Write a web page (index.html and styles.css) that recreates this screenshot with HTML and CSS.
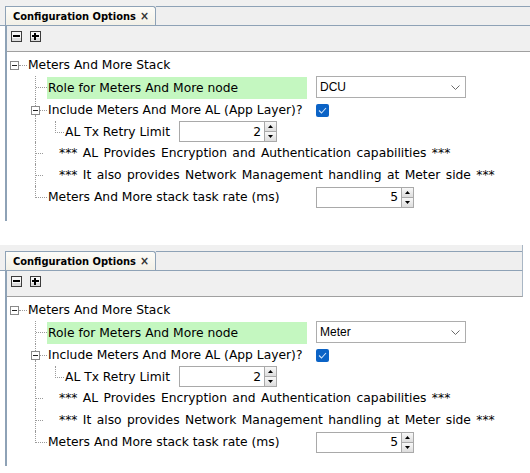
FILE: index.html
```html
<!DOCTYPE html>
<html>
<head>
<meta charset="utf-8">
<link rel="stylesheet" href="styles.css">
</head>
<body>
<div class="page">
  <div class="panel">
    <div class="tabbar">
      <div class="tab"><span class="tab-title">Configuration Options</span><span class="tab-close">×</span></div>
      <div class="tabfill"></div>
    </div>
    <div class="frame">
      <div class="toolbar">
        <svg class="tbtn" width="11" height="11" viewBox="0 0 11 11"><rect x="0.5" y="0.5" width="10" height="10" fill="#f7f7f7" stroke="#3c3c3c"/><rect x="1" y="7" width="9" height="3" fill="#dcdcdc"/><rect x="2" y="4" width="7" height="2" fill="#000"/></svg>
        <svg class="tbtn" width="11" height="11" viewBox="0 0 11 11"><rect x="0.5" y="0.5" width="10" height="10" fill="#f7f7f7" stroke="#3c3c3c"/><rect x="1" y="7" width="9" height="3" fill="#dcdcdc"/><rect x="2" y="4" width="7" height="2" fill="#000"/><rect x="4" y="2" width="2" height="7" fill="#000"/></svg>
      </div>
      <div class="content">
        <div class="row">
          <span class="sp3"></span>
          <span class="exp-root"><svg width="9" height="9" viewBox="0 0 9 9"><rect x="0.5" y="0.5" width="8" height="8" fill="#fff" stroke="#8a8a8a"/><rect x="2" y="4" width="5" height="1" fill="#222"/></svg></span>
          <span class="hcon w8"><span class="half"></span></span>
          <span class="label">Meters And More Stack</span>
        </div>
        <div class="row row-tall">
          <span class="sp28"></span>
          <span class="tee w12"><span class="half"></span></span>
          <span class="label w-role hl">Role for Meters And More node</span>
          <div class="dropdown"><span>DCU</span><svg class="chev" width="9" height="5" viewBox="0 0 9 5"><path d="M0.5 0.5 L4.5 4.5 L8.5 0.5" fill="none" stroke="#6a6a6a"/></svg></div>
        </div>
        <div class="row">
          <span class="sp24"></span>
          <span class="exp"><span class="seg-top"></span><svg width="9" height="9" viewBox="0 0 9 9"><rect x="0.5" y="0.5" width="8" height="8" fill="#fff" stroke="#8a8a8a"/><rect x="2" y="4" width="5" height="1" fill="#222"/></svg><span class="seg-bot"></span></span>
          <span class="hcon w7"><span class="half"></span></span>
          <span class="label w269">Include Meters And More AL (App Layer)?</span>
          <span class="check"><svg width="9" height="7" viewBox="0 0 9 7"><path d="M1 3.5 L3.5 6 L8 1" fill="none" stroke="#cfe3fa" stroke-width="1.1"/></svg></span>
        </div>
        <div class="row row-short">
          <span class="sp28"></span>
          <span class="vline w20"></span>
          <span class="elbow w9"><span class="half"></span></span>
          <span class="label w115">AL Tx Retry Limit</span>
          <div class="spin">
            <span class="spin-val">2</span>
            <span class="spin-btns">
              <span class="spin-btn"><svg width="5" height="3" viewBox="0 0 5 3"><path d="M2.5 0 L5 3 L0 3 Z" fill="#000"/></svg></span>
              <span class="spin-btn"><svg width="5" height="3" viewBox="0 0 5 3"><path d="M0 0 L5 0 L2.5 3 Z" fill="#000"/></svg></span>
            </span>
          </div>
        </div>
        <div class="row">
          <span class="sp28"></span>
          <span class="tee w8"><span class="half"></span></span>
          <span class="label note">*** AL Provides Encryption and Authentication capabilities ***</span>
        </div>
        <div class="row">
          <span class="sp28"></span>
          <span class="tee w8"><span class="half"></span></span>
          <span class="label note">*** It also provides Network Management handling at Meter side ***</span>
        </div>
        <div class="row">
          <span class="sp28"></span>
          <span class="elbow w12"><span class="half"></span></span>
          <span class="label w269">Meters And More stack task rate (ms)</span>
          <div class="spin">
            <span class="spin-val">5</span>
            <span class="spin-btns">
              <span class="spin-btn"><svg width="5" height="3" viewBox="0 0 5 3"><path d="M2.5 0 L5 3 L0 3 Z" fill="#000"/></svg></span>
              <span class="spin-btn"><svg width="5" height="3" viewBox="0 0 5 3"><path d="M0 0 L5 0 L2.5 3 Z" fill="#000"/></svg></span>
            </span>
          </div>
        </div>
      </div>
    </div>
  </div>

  <div class="panel panel-narrow">
    <div class="tabbar">
      <div class="tab"><span class="tab-title">Configuration Options</span><span class="tab-close">×</span></div>
      <div class="tabfill"></div>
    </div>
    <div class="frame">
      <div class="toolbar">
        <svg class="tbtn" width="11" height="11" viewBox="0 0 11 11"><rect x="0.5" y="0.5" width="10" height="10" fill="#f7f7f7" stroke="#3c3c3c"/><rect x="1" y="7" width="9" height="3" fill="#dcdcdc"/><rect x="2" y="4" width="7" height="2" fill="#000"/></svg>
        <svg class="tbtn" width="11" height="11" viewBox="0 0 11 11"><rect x="0.5" y="0.5" width="10" height="10" fill="#f7f7f7" stroke="#3c3c3c"/><rect x="1" y="7" width="9" height="3" fill="#dcdcdc"/><rect x="2" y="4" width="7" height="2" fill="#000"/><rect x="4" y="2" width="2" height="7" fill="#000"/></svg>
      </div>
      <div class="content">
        <div class="row">
          <span class="sp3"></span>
          <span class="exp-root"><svg width="9" height="9" viewBox="0 0 9 9"><rect x="0.5" y="0.5" width="8" height="8" fill="#fff" stroke="#8a8a8a"/><rect x="2" y="4" width="5" height="1" fill="#222"/></svg></span>
          <span class="hcon w8"><span class="half"></span></span>
          <span class="label">Meters And More Stack</span>
        </div>
        <div class="row row-tall">
          <span class="sp28"></span>
          <span class="tee w12"><span class="half"></span></span>
          <span class="label w-role hl">Role for Meters And More node</span>
          <div class="dropdown"><span>Meter</span><svg class="chev" width="9" height="5" viewBox="0 0 9 5"><path d="M0.5 0.5 L4.5 4.5 L8.5 0.5" fill="none" stroke="#6a6a6a"/></svg></div>
        </div>
        <div class="row">
          <span class="sp24"></span>
          <span class="exp"><span class="seg-top"></span><svg width="9" height="9" viewBox="0 0 9 9"><rect x="0.5" y="0.5" width="8" height="8" fill="#fff" stroke="#8a8a8a"/><rect x="2" y="4" width="5" height="1" fill="#222"/></svg><span class="seg-bot"></span></span>
          <span class="hcon w7"><span class="half"></span></span>
          <span class="label w269">Include Meters And More AL (App Layer)?</span>
          <span class="check"><svg width="9" height="7" viewBox="0 0 9 7"><path d="M1 3.5 L3.5 6 L8 1" fill="none" stroke="#cfe3fa" stroke-width="1.1"/></svg></span>
        </div>
        <div class="row row-short">
          <span class="sp28"></span>
          <span class="vline w20"></span>
          <span class="elbow w9"><span class="half"></span></span>
          <span class="label w115">AL Tx Retry Limit</span>
          <div class="spin">
            <span class="spin-val">2</span>
            <span class="spin-btns">
              <span class="spin-btn"><svg width="5" height="3" viewBox="0 0 5 3"><path d="M2.5 0 L5 3 L0 3 Z" fill="#000"/></svg></span>
              <span class="spin-btn"><svg width="5" height="3" viewBox="0 0 5 3"><path d="M0 0 L5 0 L2.5 3 Z" fill="#000"/></svg></span>
            </span>
          </div>
        </div>
        <div class="row">
          <span class="sp28"></span>
          <span class="tee w8"><span class="half"></span></span>
          <span class="label note">*** AL Provides Encryption and Authentication capabilities ***</span>
        </div>
        <div class="row">
          <span class="sp28"></span>
          <span class="tee w8"><span class="half"></span></span>
          <span class="label note">*** It also provides Network Management handling at Meter side ***</span>
        </div>
        <div class="row">
          <span class="sp28"></span>
          <span class="elbow w12"><span class="half"></span></span>
          <span class="label w269">Meters And More stack task rate (ms)</span>
          <div class="spin">
            <span class="spin-val">5</span>
            <span class="spin-btns">
              <span class="spin-btn"><svg width="5" height="3" viewBox="0 0 5 3"><path d="M2.5 0 L5 3 L0 3 Z" fill="#000"/></svg></span>
              <span class="spin-btn"><svg width="5" height="3" viewBox="0 0 5 3"><path d="M0 0 L5 0 L2.5 3 Z" fill="#000"/></svg></span>
            </span>
          </div>
        </div>
      </div>
    </div>
  </div>
</div>
</body>
</html>
```

FILE: styles.css
```css
* { box-sizing: border-box; }

body {
  margin: 0;
  background: #ffffff;
  color: #000;
  font-family: "DejaVu Sans", Verdana, sans-serif;
  font-size: 12.3px;
}

.page {
  display: flex;
  flex-direction: column;
  gap: 24px;
}

.panel {
  width: 530px;
  height: 221px;
  display: flex;
  flex-direction: column;
}

.panel-narrow {
  width: 523px;
}

.tabbar {
  flex: none;
  height: 26px;
  display: flex;
  padding: 6px 0 0 5px;
  background: #f0f0f0;
  border-bottom: 1px solid #8ea2b6;
}

.panel-narrow .tabbar,
.panel-narrow .toolbar {
  border-right: 1px solid #a9b6c4;
}

.tab {
  width: 151px;
  height: 19px;
  display: flex;
  align-items: center;
  padding: 0 6px 0 7px;
  border: 1px solid #8ea2b6;
  border-bottom: 0;
  border-top-right-radius: 3px;
  background: linear-gradient(#fdfcf8, #f2f0e7);
  font-family: "DejaVu Sans Condensed", "DejaVu Sans", sans-serif;
  font-stretch: condensed;
  font-weight: bold;
  font-size: 11px;
  white-space: nowrap;
}

.tab-close {
  margin-left: auto;
  font-size: 12px;
  color: #333;
}

.tabfill {
  flex: 1;
  border-top: 1px solid #8ea2b6;
  background: #efefef;
}

.frame {
  flex: 1;
  display: flex;
  flex-direction: column;
  margin-left: 5px;
  border-left: 2px solid #8ea2b6;
}

.toolbar {
  flex: none;
  height: 26px;
  display: flex;
  align-items: flex-start;
  gap: 8px;
  padding: 5px 0 0 4px;
  background: #f0f0f0;
  border-bottom: 1px solid #a0a0a0;
}

.tbtn { display: block; }

.content {
  flex: 1;
  background: #fff;
  padding-top: 2px;
}

.row {
  display: flex;
  height: 22px;
  align-items: stretch;
}

.row-tall { height: 23px; }
.row-short { height: 21px; }

.sp3 { width: 3px; flex: none; }
.sp24 { width: 24px; flex: none; }
.sp28 { width: 28px; flex: none; }

.w7 { width: 7px; }
.w8 { width: 8px; }
.w9 { width: 9px; }
.w12 { width: 12px; }
.w20 { width: 20px; }

.hcon, .tee, .elbow, .vline, .exp, .exp-root { flex: none; display: flex; flex-direction: column; }

.half {
  display: block;
  height: 12px;
  border-bottom: 1px dotted #9a9a9a;
}

.tee { border-left: 1px dotted #9a9a9a; }
.vline { border-left: 1px dotted #9a9a9a; }
.elbow .half { border-left: 1px dotted #9a9a9a; }

.exp-root { width: 9px; padding-top: 7px; }
.exp-root svg, .exp svg { display: block; flex: none; }

.exp { width: 9px; }
.seg-top {
  height: 7px;
  margin-left: 4px;
  border-left: 1px dotted #9a9a9a;
}
.seg-bot {
  flex: 1;
  margin-left: 4px;
  border-left: 1px dotted #9a9a9a;
}

.label {
  flex: none;
  display: flex;
  align-items: center;
  white-space: nowrap;
  padding-left: 1px;
}

.w-role { width: 260px; margin-right: 9px; }
.w269 { width: 269px; }
.w115 { width: 115px; }

.hl {
  background: #c4f7c0;
  margin-top: 1px;
}

.note {
  padding-left: 16px;
  word-spacing: 1.5px;
}

.dropdown {
  align-self: flex-start;
  width: 150px;
  height: 22px;
  display: flex;
  align-items: center;
  padding: 0 5px 0 3px;
  border: 1px solid #adadad;
  background: #fff;
  font-family: "Liberation Sans", Arial, sans-serif;
  font-size: 12px;
}

.chev { margin-left: auto; display: block; }

.check {
  align-self: center;
  width: 13px;
  height: 13px;
  border-radius: 2px;
  background: #0b63c6;
  display: flex;
  align-items: center;
  justify-content: center;
}

.check svg { display: block; }

.spin {
  align-self: center;
  width: 98px;
  height: 21px;
  display: flex;
  border: 1px solid #a9a9a9;
  background: #fff;
}

.spin-val {
  flex: 1;
  display: flex;
  align-items: center;
  justify-content: flex-end;
  padding-right: 3px;
}

.spin-btns {
  width: 12px;
  display: flex;
  flex-direction: column;
  border-left: 1px solid #a9a9a9;
}

.spin-btn {
  flex: 1;
  display: flex;
  align-items: center;
  justify-content: center;
  background: linear-gradient(#f8f8f8, #dddddd);
}

.spin-btn + .spin-btn { border-top: 1px solid #a9a9a9; }

.spin-btn svg { display: block; }
```
